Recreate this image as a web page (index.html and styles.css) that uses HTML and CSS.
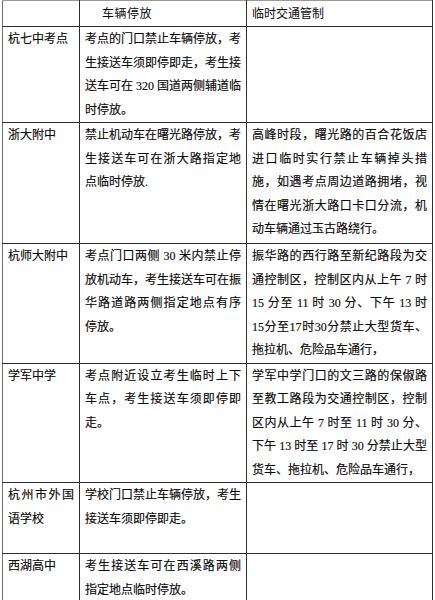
FILE: index.html
```html
<!DOCTYPE html>
<html lang="zh-CN">
<head>
<meta charset="utf-8">
<title>考点交通管制</title>
<link rel="stylesheet" href="styles.css">
</head>
<body>
<table class="grid">
  <colgroup>
    <col class="c1">
    <col class="c2">
    <col class="c3">
  </colgroup>
  <tr class="r0">
    <td class="head"></td>
    <td class="head"><span class="h-park">车辆停放</span></td>
    <td class="head">临时交通管制</td>
  </tr>
  <tr class="r1">
    <td><span class="ln">杭七中考点</span></td>
    <td>
      <span class="ln j">考点的门口禁止车辆停放，考</span>
      <span class="ln j">生接送车须即停即走，考生接</span>
      <span class="ln j">送车可在 320 国道两侧辅道临</span>
      <span class="ln">时停放。</span>
    </td>
    <td></td>
  </tr>
  <tr class="r2">
    <td><span class="ln">浙大附中</span></td>
    <td>
      <span class="ln j">禁止机动车在曙光路停放，考</span>
      <span class="ln j">生接送车可在浙大路指定地</span>
      <span class="ln">点临时停放.</span>
    </td>
    <td>
      <span class="ln j">高峰时段，曙光路的百合花饭店</span>
      <span class="ln j">进口临时实行禁止车辆掉头措</span>
      <span class="ln j">施，如遇考点周边道路拥堵，视</span>
      <span class="ln j">情在曙光浙大路口卡口分流，机</span>
      <span class="ln">动车辆通过玉古路绕行。</span>
    </td>
  </tr>
  <tr class="r3">
    <td><span class="ln">杭师大附中</span></td>
    <td>
      <span class="ln j">考点门口两侧 30 米内禁止停</span>
      <span class="ln j">放机动车，考生接送车可在振</span>
      <span class="ln j">华路道路两侧指定地点有序</span>
      <span class="ln">停放。</span>
    </td>
    <td>
      <span class="ln j">振华路的西行路至新纪路段为交</span>
      <span class="ln j">通控制区，控制区内从上午 7 时</span>
      <span class="ln j">15 分至 11 时 30 分、下午 13 时</span>
      <span class="ln j">15分至17时30分禁止大型货车、</span>
      <span class="ln">拖拉机、危险品车通行，</span>
    </td>
  </tr>
  <tr class="r4">
    <td><span class="ln">学军中学</span></td>
    <td>
      <span class="ln j">考点附近设立考生临时上下</span>
      <span class="ln j">车点，考生接送车须即停即</span>
      <span class="ln">走。</span>
    </td>
    <td>
      <span class="ln j">学军中学门口的文三路的保俶路</span>
      <span class="ln j">至教工路段为交通控制区，控制</span>
      <span class="ln j">区内从上午 7 时至 11 时 30 分、</span>
      <span class="ln j">下午 13 时至 17 时 30 分禁止大型</span>
      <span class="ln">货车、拖拉机、危险品车通行，</span>
    </td>
  </tr>
  <tr class="r5">
    <td>
      <span class="ln j">杭州市外国</span>
      <span class="ln">语学校</span>
    </td>
    <td>
      <span class="ln j">学校门口禁止车辆停放，考生</span>
      <span class="ln">接送车须即停即走。</span>
    </td>
    <td></td>
  </tr>
  <tr class="r6">
    <td><span class="ln">西湖高中</span></td>
    <td>
      <span class="ln j">考生接送车可在西溪路两侧</span>
      <span class="ln">指定地点临时停放。</span>
    </td>
    <td></td>
  </tr>
</table>
<div class="page-mark"></div>
</body>
</html>
```
FILE: styles.css
```css
html, body {
  margin: 0;
  padding: 0;
  background: #ffffff;
}

body {
  font-family: "Liberation Serif", "Noto Sans CJK SC", serif;
  font-size: 12px;
  color: #0a0a0a;
}

.grid {
  border-collapse: collapse;
  table-layout: fixed;
  width: 430px;
  margin-left: 2px;
  border-top: 1px solid #9a9a9a;
  border-left: 1px solid #6e6e6e;
  border-right: 1px solid #333333;
  border-bottom: 1px solid #2e2e2e;
}

.c1 { width: 77px; }
.c2 { width: 167px; }
.c3 { width: 186px; }

.grid td {
  border: 1px solid #2e2e2e;
  padding: 1px 5px 0 5px;
  vertical-align: top;
  line-height: 23.5px;
}

.grid tr:first-child td {
  border-top-color: #9a9a9a;
}

.grid td:first-child {
  border-left-color: #6e6e6e;
}

.grid td.head {
  vertical-align: middle;
  padding-top: 0;
  line-height: 20px;
}

.h-park {
  display: inline-block;
  padding-left: 17px;
  letter-spacing: 0.5px;
}

.ln {
  display: block;
  white-space: nowrap;
  -webkit-text-stroke: 0.15px #0a0a0a;
}

.ln.j {
  text-align: justify;
  text-align-last: justify;
  text-justify: inter-character;
}

.r0 { height: 26px; }
.r1 { height: 93px; }
.r2 { height: 121px; }
.r3 { height: 119px; }
.r4 { height: 118px; }
.r5 { height: 71px; }
.r6 { height: 48px; }

.page-mark {
  width: 28px;
  height: 3px;
  margin: 1px 0 0 202px;
  background: #c4c4c4;
}
```
